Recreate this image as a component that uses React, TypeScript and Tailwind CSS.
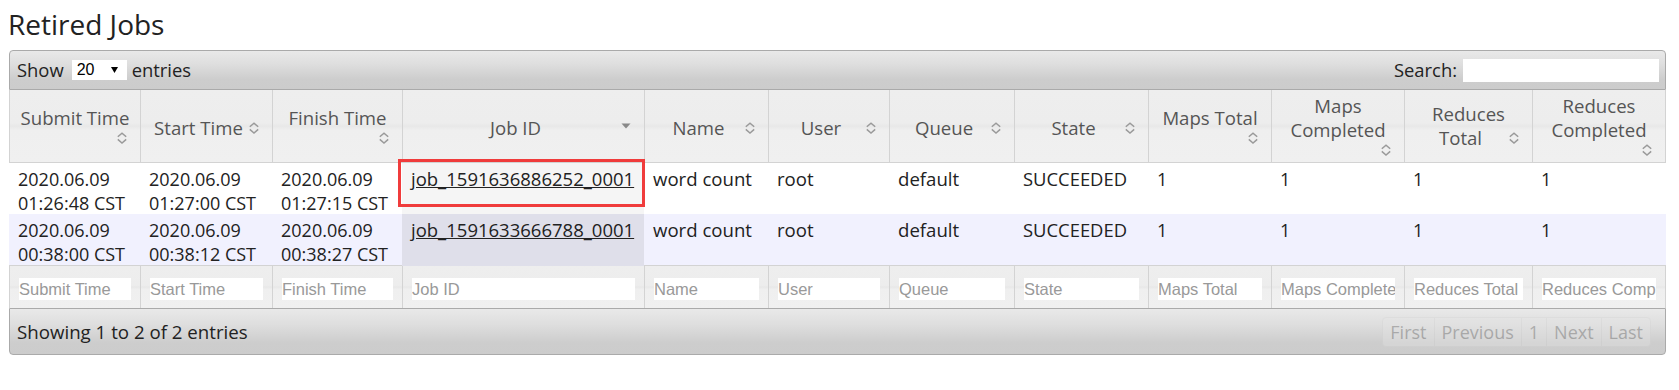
import React from "react";

type Col = {
  lines: string[];
  iconBelow?: boolean;
  sorted?: boolean;
  filter: string;
};

const columns: Col[] = [
  { lines: ["Submit Time"], iconBelow: true, filter: "Submit Time" },
  { lines: ["Start Time"], filter: "Start Time" },
  { lines: ["Finish Time"], iconBelow: true, filter: "Finish Time" },
  { lines: ["Job ID"], sorted: true, filter: "Job ID" },
  { lines: ["Name"], filter: "Name" },
  { lines: ["User"], filter: "User" },
  { lines: ["Queue"], filter: "Queue" },
  { lines: ["State"], filter: "State" },
  { lines: ["Maps Total"], iconBelow: true, filter: "Maps Total" },
  { lines: ["Maps", "Completed"], iconBelow: true, filter: "Maps Completed" },
  { lines: ["Reduces", "Total"], filter: "Reduces Total" },
  { lines: ["Reduces", "Completed"], iconBelow: true, filter: "Reduces Completed" },
];

const jobs = [
  {
    submit: ["2020.06.09", "01:26:48 CST"],
    start: ["2020.06.09", "01:27:00 CST"],
    finish: ["2020.06.09", "01:27:15 CST"],
    id: "job_1591636886252_0001",
    name: "word count",
    user: "root",
    queue: "default",
    state: "SUCCEEDED",
    counts: ["1", "1", "1", "1"],
  },
  {
    submit: ["2020.06.09", "00:38:00 CST"],
    start: ["2020.06.09", "00:38:12 CST"],
    finish: ["2020.06.09", "00:38:27 CST"],
    id: "job_1591633666788_0001",
    name: "word count",
    user: "root",
    queue: "default",
    state: "SUCCEEDED",
    counts: ["1", "1", "1", "1"],
  },
];

const gridCols =
  "grid grid-cols-[131px_132px_130px_242px_124px_121px_125px_134px_123px_133px_128px_134px]";

const barBg =
  "bg-[linear-gradient(to_bottom,#e9e9e9_0%,#dedede_35%,#cdcdcd_75%,#cccccc_100%)]";

const thBg =
  "bg-[linear-gradient(to_bottom,#eeeeee_0%,#ededed_46%,#e8e8e8_50%,#efefef_56%,#f0f0f0_100%)]";

function SortIcon() {
  return (
    <svg width="16" height="16" viewBox="0 0 16 16" className="shrink-0">
      <path
        d="M3.8 6.8L8 3.2l4.2 3.6M3.8 9.4L8 13l4.2-3.6"
        fill="none"
        stroke="#9a9a9a"
        strokeWidth="1.5"
      />
    </svg>
  );
}

function DescIcon() {
  return (
    <svg width="16" height="16" viewBox="0 0 16 16" className="shrink-0">
      <path d="M3.5 3.5h9L8 8.5z" fill="#888888" />
    </svg>
  );
}

function HeaderCell({ col, last }: { col: Col; last: boolean }) {
  const icon = col.sorted ? <DescIcon /> : <SortIcon />;
  const single = !col.iconBelow && col.lines.length === 1;
  return (
    <div
      className={`flex flex-col justify-center border-l border-b border-[#d3d3d3] px-[10px] ${
        single ? "pt-[8px] pb-[4px]" : "py-[4px]"
      } ${last ? "border-r" : ""} ${thBg} text-[18.6px] text-[#555555]`}
    >
      {col.lines.map((line, i) =>
        i === col.lines.length - 1 && !col.iconBelow ? (
          <div key={i} className="flex items-center">
            <span className="flex-1 text-center whitespace-nowrap">{line}</span>
            {icon}
          </div>
        ) : (
          <div key={i} className="text-center whitespace-nowrap">
            {line}
          </div>
        )
      )}
      {col.iconBelow && <div className="flex justify-end">{icon}</div>}
    </div>
  );
}

function Cell({ children, className = "" }: any) {
  return (
    <div className={`pl-[9px] pr-[8px] pt-[4px] whitespace-nowrap ${className}`}>
      {children}
    </div>
  );
}

export default function App() {
  return (
    <div className="min-h-[390px] bg-white pt-[6px] font-['Open_Sans',sans-serif] text-[18px] leading-[24px] text-[#222222]">
      <h2 className="ml-[8px] mb-[8px] text-[28px] leading-[36px] font-normal text-[#222222]">
        Retired Jobs
      </h2>

      <div className="ml-[9px] w-[1657px]">
        {/* top toolbar */}
        <div
          className={`flex h-[40px] items-center justify-between rounded-t-[4px] border border-[#aaaaaa] pl-[7px] pr-[6px] ${barBg} text-[18.4px]`}
        >
          <div className="flex items-center">
            <span>Show</span>
            <div className="ml-[8px] mr-[5px] flex h-[20px] w-[55px] items-center justify-between bg-white pl-[5px] pr-[9px] font-['Liberation_Sans',Arial,sans-serif] text-[16px] text-black">
              <span>20</span>
              <svg width="7" height="6" viewBox="0 0 7 6">
                <path d="M0 0h7L3.5 6z" fill="#000000" />
              </svg>
            </div>
            <span>entries</span>
          </div>
          <div className="flex items-center">
            <span>Search:</span>
            <input className="ml-[6px] h-[23px] w-[196px] bg-white outline-none" />
          </div>
        </div>

        {/* column headers */}
        <div className={`${gridCols} h-[73px]`}>
          {columns.map((c, i) => (
            <HeaderCell key={i} col={c} last={i === columns.length - 1} />
          ))}
        </div>

        {/* rows */}
        {jobs.map((job, r) => {
          const even = r % 2 === 1;
          return (
            <div
              key={job.id}
              className={`${gridCols} h-[51px] ${even ? "bg-[#f1f1fe]" : "bg-white"}`}
            >
              <Cell>
                <div>{job.submit[0]}</div>
                <div>{job.submit[1]}</div>
              </Cell>
              <Cell>
                <div>{job.start[0]}</div>
                <div>{job.start[1]}</div>
              </Cell>
              <Cell>
                <div>{job.finish[0]}</div>
                <div>{job.finish[1]}</div>
              </Cell>
              <Cell className={`relative text-[18.5px] ${even ? "bg-[#dfdfea]" : "bg-[#f5f5f5]"}`}>
                <a href="#" className="text-[#222222] underline">
                  {job.id}
                </a>
                {r === 0 && (
                  <div className="absolute -left-[4px] -right-[1px] -top-[4px] bottom-[8px] border-[3px] border-[#f03c3c]" />
                )}
              </Cell>
              <Cell className="text-[18.6px]">{job.name}</Cell>
              <Cell className="text-[18.6px]">{job.user}</Cell>
              <Cell className="text-[18.6px]">{job.queue}</Cell>
              <Cell className="text-[18.4px]">{job.state}</Cell>
              {job.counts.map((n, i) => (
                <Cell key={i}>{n}</Cell>
              ))}
            </div>
          );
        })}

        {/* filter row */}
        <div className={gridCols}>
          {columns.map((c, i) => (
            <div
              key={i}
              className={`border-l border-t border-[#d3d3d3] pl-[9px] pr-[9px] pt-[12px] pb-[8px] ${thBg} ${
                i === columns.length - 1 ? "border-r" : ""
              }`}
            >
              <input
                placeholder={c.filter}
                className="block h-[22px] w-full bg-white px-0 font-['Liberation_Sans',Arial,sans-serif] text-[16.5px] text-[#333] outline-none placeholder:text-[#999999]"
              />
            </div>
          ))}
        </div>

        {/* bottom toolbar */}
        <div
          className={`flex h-[47px] items-center justify-between rounded-b-[4px] border border-[#aaaaaa] pl-[7px] pr-[14px] ${barBg} text-[18.7px]`}
        >
          <span>Showing 1 to 2 of 2 entries</span>
          <div className="flex h-[30px] opacity-35 text-[18px]">
            {["First", "Previous", "1", "Next", "Last"].map((b, i, arr) => (
              <span
                key={b}
                className={`flex items-center border border-[#d3d3d3] bg-[#e6e6e6] px-[7px] text-[#555555] ${
                  i > 0 ? "-ml-px" : "rounded-l-[4px]"
                } ${i === arr.length - 1 ? "rounded-r-[4px]" : ""}`}
              >
                {b}
              </span>
            ))}
          </div>
        </div>
      </div>
    </div>
  );
}
